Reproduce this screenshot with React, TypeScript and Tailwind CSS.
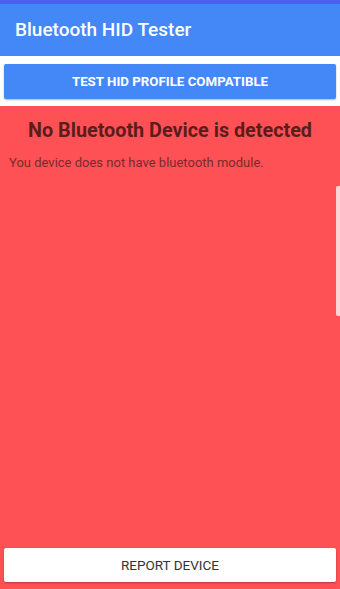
export default function App() {
  return (
    <div
      className="flex h-[589px] w-[340px] flex-col overflow-hidden bg-white"
      style={{ fontFamily: "Roboto, 'Liberation Sans', sans-serif" }}
    >
      {/* status bar */}
      <div className="h-[4px] bg-[#4f5ef0]" />

      {/* app bar */}
      <div className="flex h-[52px] items-center bg-[#4487f7] px-[15px]">
        <span className="text-[19px] font-medium text-white">Bluetooth HID Tester</span>
      </div>

      <div className="px-[4px] pb-[7px] pt-[8px]">
        <button className="flex h-[35px] w-full items-center justify-center rounded-[2px] bg-[#4487f7] text-[13.3px] font-bold text-white shadow-[0_1px_2px_rgba(0,0,0,0.3)]">
          TEST HID PROFILE COMPATIBLE
        </button>
      </div>

      <div className="relative flex flex-1 flex-col bg-[#fe5155]">
        <h1 className="mt-[12px] text-center text-[19.8px] font-bold leading-[26px] text-[#5c1c1e]">
          No Bluetooth Device is detected
        </h1>
        <p className="mt-[11px] px-[9px] text-[13px] leading-[16px] text-[#7a2a2c]">
          You device does not have bluetooth module.
        </p>

        {/* scroll thumb */}
        <div className="absolute right-0 top-[80px] h-[130px] w-[4px] rounded-l-[2px] bg-[#ffd4d4]" />

        <div className="mt-auto px-[4px] pb-[7px]">
          <button className="flex h-[34px] w-full items-center justify-center rounded-[2px] bg-white text-[13.5px] text-[#333] shadow-[0_1px_2px_rgba(0,0,0,0.3)]">
            REPORT DEVICE
          </button>
        </div>
      </div>
    </div>
  );
}
